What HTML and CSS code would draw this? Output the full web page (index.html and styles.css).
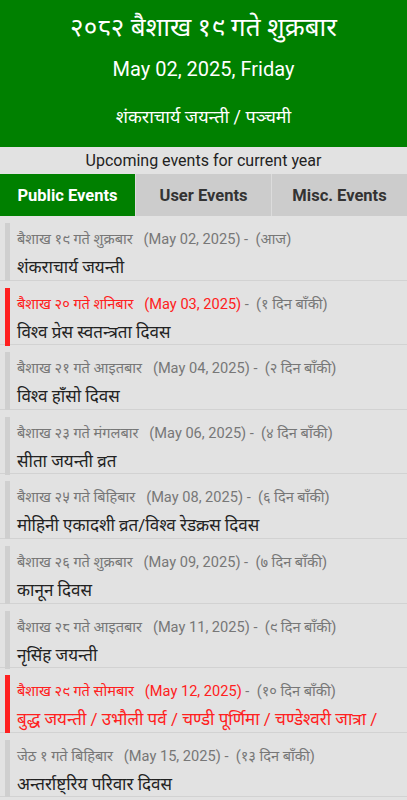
FILE: index.html
```html
<!DOCTYPE html>
<html lang="ne">
<head>
    <meta charset="UTF-8">
    <meta name="viewport" content="width=device-width, initial-scale=1.0">
    <title>Nepali Calendar</title>
    <link rel="stylesheet" href="styles.css">
</head>
<body>
    <div class="header">
        <h1 class="nep-date">२०८२ बैशाख १९ गते शुक्रबार</h1>
        <p class="eng-date">May 02, 2025, Friday</p>
        <p class="today-event">शंकराचार्य जयन्ती / पञ्चमी</p>
    </div>

    <div class="subtitle">Upcoming events for current year</div>

    <div class="tabs">
        <button class="tab active">Public Events</button>
        <button class="tab">User Events</button>
        <button class="tab">Misc. Events</button>
    </div>

    <ul class="events">
        <li class="event">
            <p class="when"><span class="day">बैशाख १९ गते शुक्रबार   (May 02, 2025)</span> -  (आज)</p>
            <p class="name">शंकराचार्य जयन्ती</p>
        </li>
        <li class="event holiday">
            <p class="when"><span class="day">बैशाख २० गते शनिबार   (May 03, 2025)</span> -  (१ दिन बाँकी)</p>
            <p class="name">विश्व प्रेस स्वतन्त्रता दिवस</p>
        </li>
        <li class="event">
            <p class="when"><span class="day">बैशाख २१ गते आइतबार   (May 04, 2025)</span> -  (२ दिन बाँकी)</p>
            <p class="name">विश्व हाँसो दिवस</p>
        </li>
        <li class="event">
            <p class="when"><span class="day">बैशाख २३ गते मंगलबार   (May 06, 2025)</span> -  (४ दिन बाँकी)</p>
            <p class="name">सीता जयन्ती व्रत</p>
        </li>
        <li class="event">
            <p class="when"><span class="day">बैशाख २५ गते बिहिबार   (May 08, 2025)</span> -  (६ दिन बाँकी)</p>
            <p class="name">मोहिनी एकादशी व्रत/विश्व रेडक्रस दिवस</p>
        </li>
        <li class="event">
            <p class="when"><span class="day">बैशाख २६ गते शुक्रबार   (May 09, 2025)</span> -  (७ दिन बाँकी)</p>
            <p class="name">कानून दिवस</p>
        </li>
        <li class="event">
            <p class="when"><span class="day">बैशाख २८ गते आइतबार   (May 11, 2025)</span> -  (९ दिन बाँकी)</p>
            <p class="name">नृसिंह जयन्ती</p>
        </li>
        <li class="event holiday red-name">
            <p class="when"><span class="day">बैशाख २९ गते सोमबार   (May 12, 2025)</span> -  (१० दिन बाँकी)</p>
            <p class="name">बुद्ध जयन्ती / उभौली पर्व / चण्डी पूर्णिमा / चण्डेश्वरी जात्रा /</p>
        </li>
        <li class="event">
            <p class="when"><span class="day">जेठ १ गते बिहिबार   (May 15, 2025)</span> -  (१३ दिन बाँकी)</p>
            <p class="name">अन्तर्राष्ट्रिय परिवार दिवस</p>
        </li>
    </ul>
</body>
</html>
```

FILE: styles.css
```css
body {
    margin: 0;
    background-color: #e2e2e2;
    font-family: Roboto, "Noto Sans", sans-serif;
    overflow: hidden;
}
.header {
    background-color: #008000;
    color: white;
    text-align: center;
    height: 147px;
    padding-top: 8px;
    box-sizing: border-box;
}
.header .nep-date {
    margin: 0;
    font-size: 26px;
    font-weight: normal;
    line-height: 38px;
}
.header .eng-date {
    margin: 9px 0 0;
    font-size: 20px;
    line-height: 28px;
}
.header .today-event {
    margin: 21px 0 0;
    font-size: 18px;
    line-height: 26px;
}
.subtitle {
    height: 27px;
    line-height: 27px;
    text-align: center;
    font-size: 16px;
    color: #222;
}
.tabs {
    display: flex;
    gap: 1px;
    height: 42px;
    background-color: #dcdcdc;
}
.tab {
    flex: 1;
    border: none;
    margin: 0;
    padding: 0;
    background-color: #cccccc;
    color: #333;
    font-family: Roboto, sans-serif;
    font-size: 16.5px;
    font-weight: bold;
}
.tab.active {
    background-color: #008000;
    color: white;
}
.events {
    list-style: none;
    margin: 0;
    padding: 0;
}
.event {
    height: 64.6px;
    box-sizing: border-box;
    padding: 7px 0 3px 5px;
    border-bottom: 1px solid #d2d2d2;
}
.event .when,
.event .name {
    margin: 0;
    padding-left: 7px;
    border-left: 5px solid #cfcfcf;
    white-space: pre;
    overflow: hidden;
}
.event .when {
    font-size: 14.6px;
    line-height: 30px;
    padding-top: 1px;
    color: #777;
}
.event .name {
    font-size: 17px;
    line-height: 26px;
    padding-bottom: 1px;
    color: #222;
    white-space: nowrap;
}
.event.holiday .when,
.event.holiday .name {
    border-left-color: #ff2020;
}
.event.holiday .day,
.event.red-name .name {
    color: #ff2020;
}
```
